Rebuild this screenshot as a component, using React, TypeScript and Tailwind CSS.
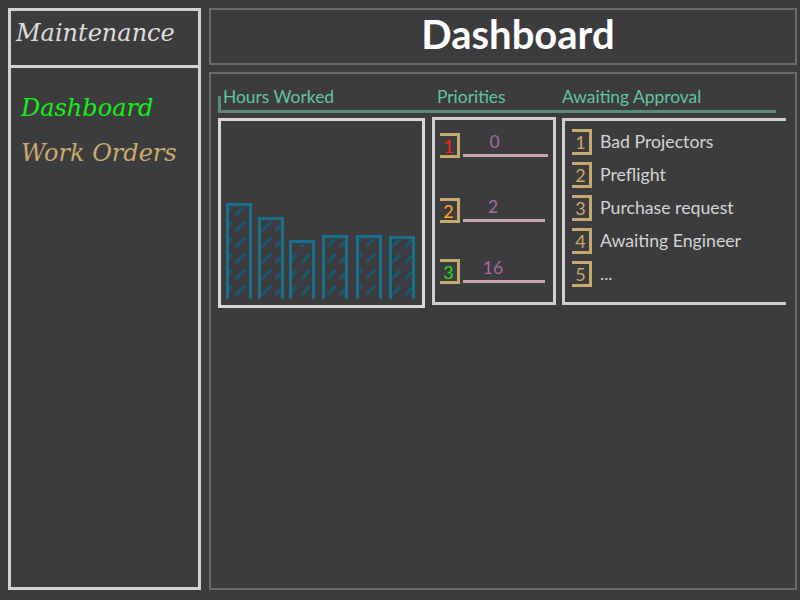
import React from 'react';

const serif = { fontFamily: '"DejaVu Serif", serif' };

const bars = [
  { x: 5, top: 82 },
  { x: 37, top: 96 },
  { x: 68, top: 119 },
  { x: 101, top: 114 },
  { x: 135, top: 114 },
  { x: 168, top: 115 },
];

const priorities = [
  { n: '1', value: '0', color: 'text-[#ff1f1f]', mt: 'mt-0', line: 'w-[85px]' },
  { n: '2', value: '2', color: 'text-[#ffa51c]', mt: 'mt-[39px]', line: 'w-[82px]' },
  { n: '3', value: '16', color: 'text-[#1fe01f]', mt: 'mt-[35px]', line: 'w-[82px]' },
];

const approvals = ['Bad Projectors', 'Preflight', 'Purchase request', 'Awaiting Engineer', '...'];

const HoursChart = () => (
  <svg width="201" height="184" viewBox="0 0 201 184">
    <defs>
      <pattern id="hatch" patternUnits="userSpaceOnUse" width="13" height="16">
        <line x1="3" y1="13" x2="10" y2="6" stroke="#1a5870" strokeWidth="3" strokeLinecap="round" />
      </pattern>
    </defs>
    {bars.map((b, i) => (
      <g key={i}>
        <rect x={b.x + 3} y={b.top + 4} width={20} height={178 - b.top - 4} fill="url(#hatch)" />
        <path
          d={`M${b.x + 1.5},178 V${b.top + 1.5} H${b.x + 24.5} V178`}
          fill="none"
          stroke="#1b6e8c"
          strokeWidth="3"
        />
      </g>
    ))}
  </svg>
);

export default function App() {
  return (
    <div className="w-[800px] h-[600px] bg-[#3c3c3e] flex pl-[8px] pt-[8px] pb-[10px] pr-[3px] gap-[8px]" style={{ fontFamily: 'Lato, sans-serif' }}>
      {/* sidebar */}
      <aside className="w-[193px] border-[3px] border-[#d2d2d2] flex flex-col">
        <div className="h-[57px] border-b-[3px] border-[#d2d2d2] pl-[5px]">
          <span className="italic text-[24px] leading-[45px] text-[#dcdcdc]" style={serif}>Maintenance</span>
        </div>
        <nav className="mt-[18px] pl-[10px] flex flex-col italic text-[24px] leading-[45px]" style={serif}>
          <span className="text-[#14f014]">Dashboard</span>
          <span className="text-[#c8aa6e]">Work Orders</span>
        </nav>
      </aside>

      {/* main */}
      <main className="flex-1 flex flex-col gap-[7px]">
        <header className="h-[57px] border-2 border-[#6b6b6b] flex justify-center pl-[30px]">
          <h1 className="text-[40px] font-bold leading-[49px] text-white">Dashboard</h1>
        </header>

        <section className="flex-1 border-2 border-[#6b6b6b] pl-[7px] pt-[22px]">
          <div className="h-[17px] mr-[19px] border-l-[3px] border-b-[3px] border-[#5a8a7a] flex text-[17.4px] text-[#62c4a0]">
            <span className="block w-[216px] pl-[2px] leading-[20px] -mt-[9px]">Hours Worked</span>
            <span className="block w-[125px] leading-[20px] -mt-[9px]">Priorities</span>
            <span className="block leading-[20px] -mt-[9px]">Awaiting Approval</span>
          </div>

          <div className="mt-[5px] flex items-start">
            <div className="w-[207px] h-[190px] border-[3px] border-[#d8d8d8]">
              <HoursChart />
            </div>

            <div className="ml-[7px] -mt-[1px] w-[124px] h-[188px] border-[3px] border-[#cfcfcf] pl-[5px] pt-[12px] flex flex-col">
              {priorities.map((p) => (
                <div key={p.n} className={`flex items-end ${p.mt}`}>
                  <div className={`w-[20px] h-[25px] border-y-[3px] border-r-[3px] border-[#c6a96c] flex items-center justify-center text-[18px] leading-none ${p.color}`}>
                    {p.n}
                  </div>
                  <div className={`ml-[3px] ${p.line} border-b-[3px] border-[#c8a4b2] pr-[22px] pb-[2px] text-center text-[17.5px] leading-[20px] text-[#a8689e] mb-[1px]`}>
                    {p.value}
                  </div>
                </div>
              ))}
            </div>

            <div className="ml-[6px] w-[224px] h-[187px] border-t-[3px] border-l-[3px] border-b-[3px] border-[#cfcfcf] pl-[7px] pt-[8px] flex flex-col gap-[7px]">
              {approvals.map((a, i) => (
                <div key={a} className="flex items-center">
                  <div className="w-[20px] h-[26px] border-y-[3px] border-r-[3px] border-[#c6a96c] flex items-center justify-center text-[18px] leading-none text-[#c6a96c]">
                    {i + 1}
                  </div>
                  <span className="ml-[8px] text-[17.7px] leading-[20px] text-[#d4d4d4]">{a}</span>
                </div>
              ))}
            </div>
          </div>
        </section>
      </main>
    </div>
  );
}
